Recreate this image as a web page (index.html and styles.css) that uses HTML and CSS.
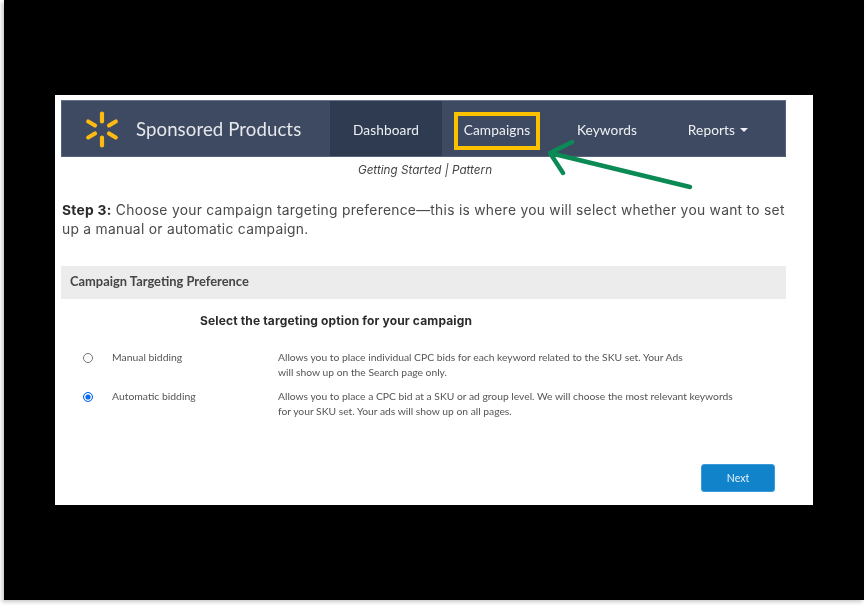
FILE: index.html
```html
<!DOCTYPE html>
<html lang="en">
<head>
<meta charset="utf-8">
<title>Sponsored Products</title>
<link rel="stylesheet" href="styles.css">
</head>
<body>
<div class="slide">
  <main class="panel">
    <header class="nav">
      <div class="brand">
        <svg class="spark" viewBox="0 0 36 36" width="36" height="37" aria-hidden="true">
          <g fill="#fdbb12">
            <rect x="15.9" y="0" width="4.2" height="12" rx="2.1"/>
            <rect x="15.9" y="0" width="4.2" height="12" rx="2.1" transform="rotate(60 18 18)"/>
            <rect x="15.9" y="0" width="4.2" height="12" rx="2.1" transform="rotate(120 18 18)"/>
            <rect x="15.9" y="0" width="4.2" height="12" rx="2.1" transform="rotate(180 18 18)"/>
            <rect x="15.9" y="0" width="4.2" height="12" rx="2.1" transform="rotate(240 18 18)"/>
            <rect x="15.9" y="0" width="4.2" height="12" rx="2.1" transform="rotate(300 18 18)"/>
          </g>
        </svg>
        <span class="brand-name">Sponsored Products</span>
      </div>
      <nav class="menu">
        <a class="item item-dash">Dashboard</a>
        <a class="item item-camp">Campaigns</a>
        <a class="item item-key">Keywords</a>
        <a class="item item-rep">Reports <span class="caret"></span></a>
      </nav>
    </header>
    <p class="crumb">Getting Started | Pattern</p>
    <p class="intro"><b>Step 3:</b> Choose your campaign targeting preference—this is where you will select whether you want to set<br>up a manual or automatic campaign.</p>
    <h2 class="bar">Campaign Targeting Preference</h2>
    <h3 class="sub">Select the targeting option for your campaign</h3>
    <div class="option">
      <span class="radio"></span>
      <span class="label">Manual bidding</span>
      <span class="desc">Allows you to place individual CPC bids for each keyword related to the SKU set. Your Ads<br>will show up on the Search page only.</span>
    </div>
    <div class="option">
      <span class="radio radio-on"></span>
      <span class="label">Automatic bidding</span>
      <span class="desc">Allows you to place a CPC bid at a SKU or ad group level. We will choose the most relevant keywords<br>for your SKU set. Your ads will show up on all pages.</span>
    </div>
    <div class="actions"><button class="next">Next</button></div>
    <div class="highlight"></div>
    <svg class="arrow" viewBox="0 0 150 50" width="150" height="50" aria-hidden="true">
      <path d="M142 47 L2 13 M2 13 L24 2 M2 13 L15 33" fill="none" stroke="#0b8a55" stroke-width="4.4" stroke-linecap="round" stroke-linejoin="round"/>
    </svg>
  </main>
</div>
</body>
</html>
```
FILE: styles.css
```css
* { box-sizing: border-box; }
html, body { margin: 0; padding: 0; background: #fff; }
body { width: 868px; height: 608px; overflow: hidden; font-family: "Lato", "Liberation Sans", sans-serif; }
.slide {
  margin-left: 4px;
  width: 860px;
  height: 600px;
  background: #000;
  padding: 95px 51px 0;
  box-shadow: -2px 2px 4px rgba(0,0,0,.22);
}
.panel {
  position: relative;
  width: 758px;
  height: 410px;
  background: #fff;
  padding: 5px 27px 0 6px;
  color: #333;
  filter: blur(.4px);
}
.nav {
  display: flex;
  height: 57px;
  background: #3e4a61;
  color: #eef0f3;
  border: 1px solid #59647a;
  border-top-color: #6a7488;
}
.brand { width: 268px; display: flex; align-items: center; padding-left: 22px; gap: 16px; }
.spark { flex: none; margin-top: 2px; }
.brand-name { font-size: 18.6px; letter-spacing: .1px; color: #e6e8ec; }
.menu { flex: 1; display: flex; align-items: stretch; font-size: 13.7px; padding-top: 2px; }
.item { display: flex; align-items: center; justify-content: center; letter-spacing: .1px; }
.item-dash { width: 112px; background: #2f3b50; margin-top: -2px; padding-top: 2px; }
.item-camp { width: 110px; }
.item-key { width: 110px; }
.item-rep { width: 112px; gap: 5px; }
.caret { width: 0; height: 0; border-left: 4.5px solid transparent; border-right: 4.5px solid transparent; border-top: 4.5px solid #eef0f3; }
.crumb { margin: 6px 0 0; height: 15px; line-height: 15px; text-align: center; font-size: 11.7px; font-style: italic; color: #444; font-family: "Inter", sans-serif; padding-left: 3px; }
.intro { margin: 23px 0 0 1px; font-family: "Inter", sans-serif; font-size: 13.8px; line-height: 19px; color: #4a4a4a; width: 735px; white-space: nowrap; letter-spacing: .29px; }
.intro b { font-weight: 700; color: #2a2a2a; }
.bar {
  margin: 27px 0 0;
  width: 725px;
  height: 33px;
  line-height: 30px;
  padding-left: 9px;
  background: #ececec;
  font-size: 12.9px;
  font-weight: 700;
  color: #454545;
}
.sub { margin: 14px 0 0 139px; height: 16px; line-height: 16px; font-family: "Inter", sans-serif; font-size: 12px; font-weight: 700; color: #2b2b2b; letter-spacing: .15px; }
.option { display: flex; align-items: flex-start; line-height: 15px; color: #555; padding-left: 22px; }
.sub + .option { margin-top: 21px; }
.option + .option { margin-top: 9px; }
.radio { flex: none; width: 10px; height: 10px; margin-top: 3px; border-radius: 50%; border: 1px solid #767676; background: #fff; }
.radio-on { border: 1.5px solid #0a6cf0; box-shadow: inset 0 0 0 1.4px #fff; background: #0a6cf0; }
.label { width: 185px; padding-left: 19px; flex: none; font-size: 10.4px; }
.desc { flex: none; font-size: 10.3px; white-space: nowrap; }
.actions { display: flex; justify-content: flex-end; margin-top: 45px; width: 714px; }
.next { width: 74px; height: 28px; padding: 0; border: 1px solid #3a9bd8; border-radius: 3px; background: #1083cb; color: #e6f2fa; font: 10.5px "Lato", sans-serif; }
.highlight { position: absolute; left: 399px; top: 17px; width: 86px; height: 38px; border: 4px solid #fcc200; }
.arrow { position: absolute; left: 493px; top: 45px; }
```
